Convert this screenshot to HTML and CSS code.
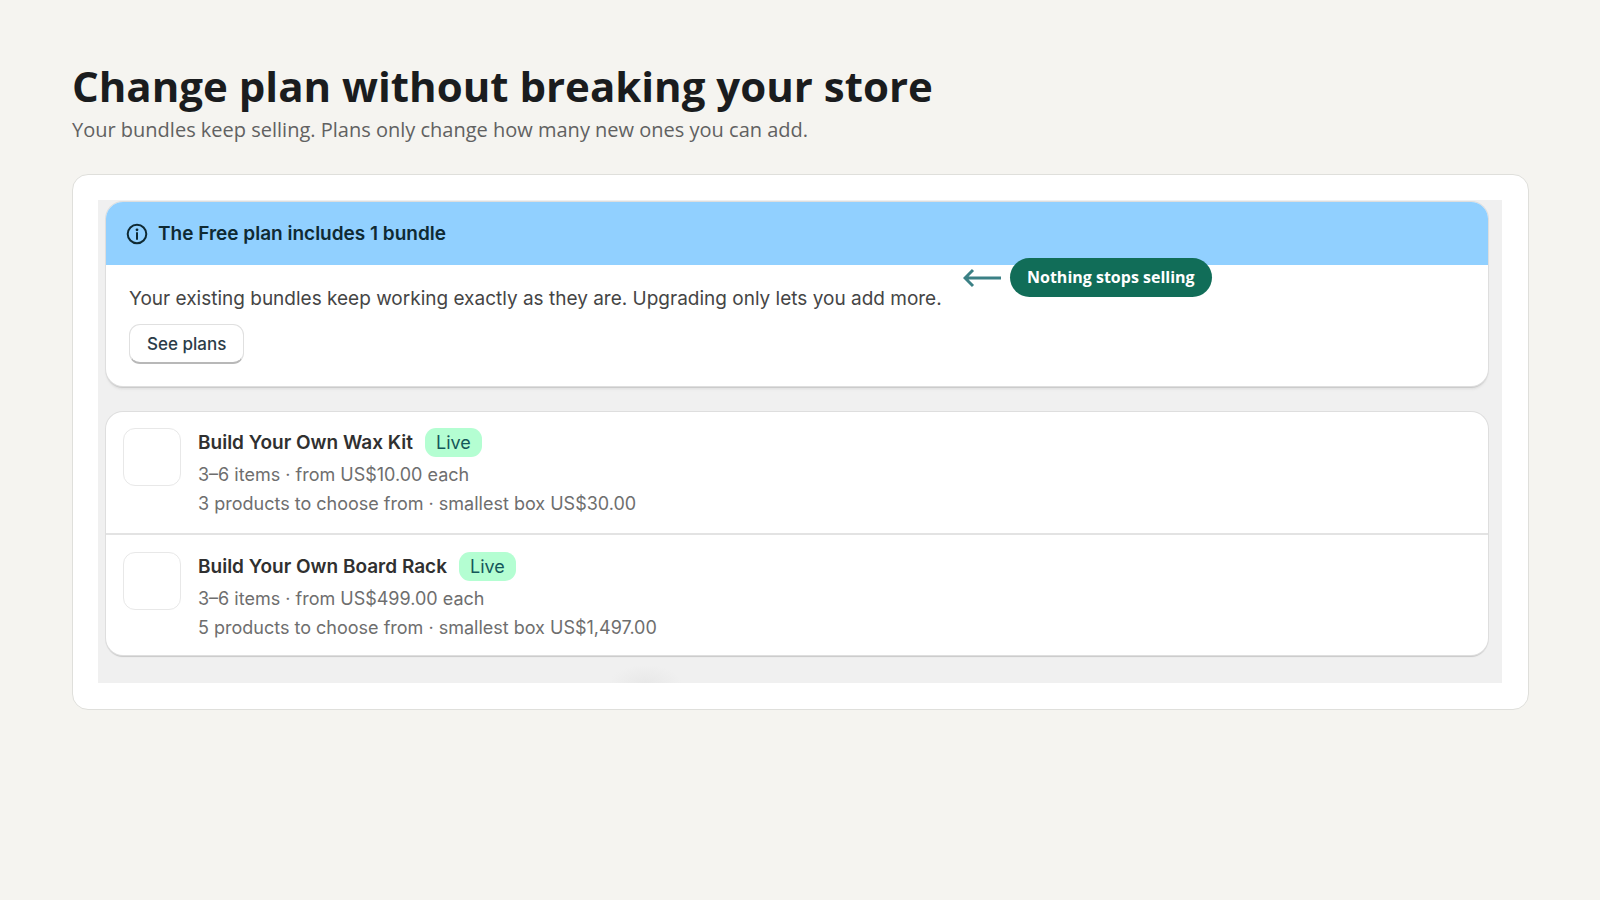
FILE: index.html
```html
<!DOCTYPE html>
<html lang="en">
<head>
  <meta charset="UTF-8" />
  <meta name="viewport" content="width=device-width, initial-scale=1.0"/>
  <title>Change plan without breaking your store</title>
  <link rel="stylesheet" href="styles.css">
</head>
<body>

  <header class="page-header">
    <h1>Change plan without breaking your store</h1>
    <p>Your bundles keep selling. Plans only change how many new ones you can add.</p>
  </header>

  <main class="frame">
    <div class="screen">

      <section class="banner">
        <div class="banner-head">
          <svg class="info-icon" viewBox="0 0 22 22" aria-hidden="true">
            <circle cx="11" cy="11" r="9.3" fill="none" stroke="currentColor" stroke-width="2"/>
            <circle cx="11" cy="6.8" r="1.4" fill="currentColor"/>
            <path d="M11 10v6" stroke="currentColor" stroke-width="2" stroke-linecap="round"/>
          </svg>
          <h2>The Free plan includes 1 bundle</h2>
        </div>
        <div class="banner-body">
          <p>Your existing bundles keep working exactly as they are. Upgrading only lets you add more.</p>
          <button type="button" class="button">See plans</button>
        </div>

        <div class="callout">
          <svg class="callout-arrow" viewBox="0 0 38 20" aria-hidden="true">
            <path d="M38 10H2M10 2L2 10l8 8" fill="none" stroke="currentColor" stroke-width="3"/>
          </svg>
          <span class="callout-label">Nothing stops selling</span>
        </div>
      </section>

      <ul class="bundle-list">
        <li class="bundle">
          <div class="thumb"></div>
          <div class="bundle-info">
            <div class="bundle-title">
              <h3>Build Your Own Wax Kit</h3>
              <span class="badge">Live</span>
            </div>
            <p>3–6 items · from US$10.00 each</p>
            <p>3 products to choose from · smallest box US$30.00</p>
          </div>
        </li>
        <li class="bundle">
          <div class="thumb"></div>
          <div class="bundle-info">
            <div class="bundle-title">
              <h3>Build Your Own Board Rack</h3>
              <span class="badge">Live</span>
            </div>
            <p>3–6 items · from US$499.00 each</p>
            <p>5 products to choose from · smallest box US$1,497.00</p>
          </div>
        </li>
      </ul>

    </div>
  </main>

</body>
</html>
```
FILE: styles.css
```css
* {
  margin: 0;
  padding: 0;
  box-sizing: border-box;
}

body {
  padding: 56px 71px 72px 72px;
  font-family: 'Inter', sans-serif;
  background: #f5f4f0;
  color: #303030;
}

.page-header {
  font-family: 'Open Sans', 'Noto Sans', sans-serif;
  margin-bottom: 30px;
}

.page-header h1 {
  font-size: 42px;
  line-height: 60px;
  font-weight: 700;
  color: #1a1c1e;
}

.page-header p {
  font-size: 20px;
  line-height: 28px;
  color: #616161;
}

.frame {
  padding: 25px 26px 26px 25px;
  background: #fff;
  border: 1px solid #dfdfdb;
  border-radius: 16px;
}

.screen {
  padding: 2px 14px 28px 8px;
  background: radial-gradient(36px 18px at 39% 100%, #e8e8e8, #f0f0f0);
}

.banner {
  position: relative;
  margin-bottom: 26px;
  background: #fff;
  border-radius: 17px;
  box-shadow: 0 0 0 1px #dedede, 0 2px 1px #c8c8c8, 0 4px 2px #e6e6e6;
}

.banner-head {
  display: flex;
  align-items: center;
  gap: 10px;
  height: 63px;
  padding: 0 20px;
  background: #91d0ff;
  border-radius: 17px 17px 0 0;
  color: #0f2a33;
}

.info-icon {
  width: 22px;
  height: 22px;
}

.banner-head h2 {
  font-size: 19px;
  line-height: 25px;
  font-weight: 600;
}

.banner-body {
  padding: 20px 23px 22px;
}

.banner-body p {
  margin-bottom: 11px;
  font-size: 19px;
  line-height: 28px;
  color: #454545;
}

.button {
  display: block;
  height: 40px;
  padding: 0 17px;
  background: #fff;
  border: 1px solid #e0e0e0;
  border-bottom: 2px solid #b8b8b8;
  border-radius: 11px;
  font-family: inherit;
  font-size: 17px;
  font-weight: 500;
  color: #2b3c48;
}

/* pinned over the banner, next to the end of its text */
.callout {
  position: absolute;
  top: 56px;
  left: 857px;
  display: flex;
  align-items: center;
  gap: 9px;
}

.callout-arrow {
  width: 38px;
  height: 20px;
  color: #3b8085;
}

.callout-label {
  padding: 0 17px;
  background: #116d58;
  border-radius: 20px;
  font-family: 'Open Sans', 'Noto Sans', sans-serif;
  font-size: 16px;
  line-height: 39px;
  font-weight: 700;
  color: #fff;
  white-space: nowrap;
}

.bundle-list {
  list-style: none;
  background: #fff;
  border-radius: 17px;
  box-shadow: 0 0 0 1px #dedede, 0 2px 1px #c8c8c8;
}

.bundle {
  display: flex;
  gap: 17px;
  padding: 16px 17px 15px;
}

.bundle + .bundle {
  padding-top: 17px;
  padding-bottom: 13px;
  border-top: 2px solid #e3e3e3;
}

.thumb {
  width: 58px;
  height: 58px;
  border: 1px solid #e8e8e8;
  border-radius: 12px;
}

.bundle-title {
  display: flex;
  align-items: flex-start;
  gap: 12px;
  margin-bottom: 2px;
}

.bundle-title h3 {
  font-size: 19px;
  line-height: 30px;
  font-weight: 600;
}

.badge {
  padding: 0 11px;
  background: #b4fed2;
  border-radius: 11px;
  font-size: 18px;
  line-height: 29px;
  color: #14575a;
}

.bundle-info p {
  font-size: 18px;
  line-height: 29px;
  color: #6e6e6e;
}

@media (max-width: 1200px) {
  body {
    padding: 32px 24px;
  }
  .callout {
    left: auto;
    right: 24px;
  }
}
```
